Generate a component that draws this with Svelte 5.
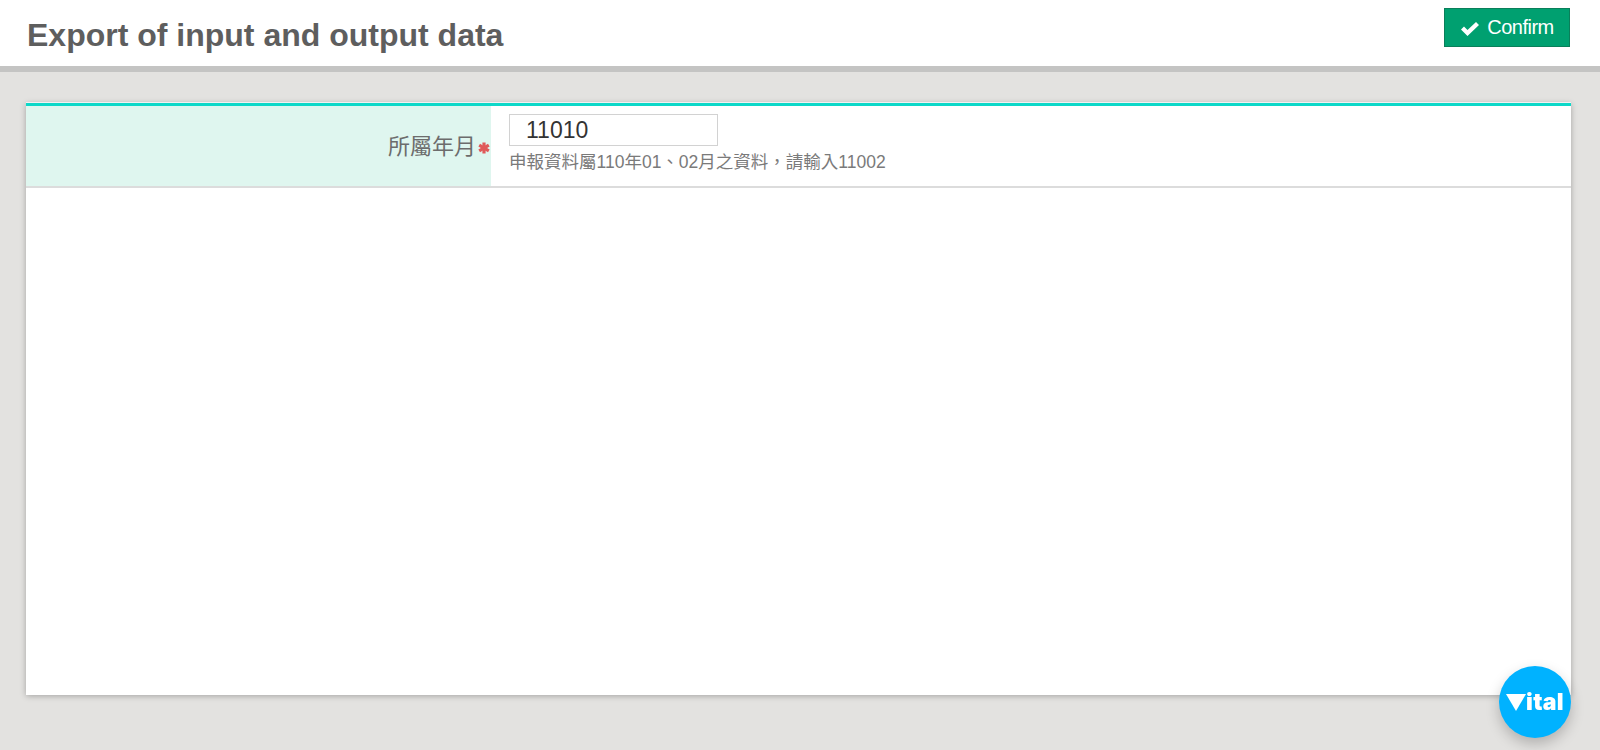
<script>
let period = $state("11010");
</script>

<div class="page">
	<header class="topbar">
		<h1>Export of input and output data</h1>
		<button class="confirm" type="button">
			<svg class="check" viewBox="0 0 20 16" width="20" height="16" aria-hidden="true">
				<path d="M1 8.5 L4 5.5 L7.5 9 L16 1 L19 4 L7.5 15 Z" fill="#fff" />
			</svg>
			Confirm
		</button>
	</header>

	<main class="content">
		<section class="card">
			<div class="row">
				<div class="label">
					<span>所屬年月</span>
					<svg class="required" viewBox="0 0 12 12" width="12" height="12" aria-label="required">
						<g stroke="#e05a5a" stroke-width="3.2">
							<path d="M6 0.5 V11.5" />
							<path d="M1.2 3.2 L10.8 8.8" />
							<path d="M10.8 3.2 L1.2 8.8" />
						</g>
					</svg>
				</div>
				<div class="field">
					<input type="text" bind:value={period} />
					<p class="hint">申報資料屬110年01、02月之資料&#65292;請輸入11002</p>
				</div>
			</div>
		</section>
	</main>

	<button class="fab" type="button" aria-label="Vital">
		<svg viewBox="0 0 20 17" width="20" height="17" aria-hidden="true">
			<path d="M0 0 H20 L10 17 Z" fill="#fff" />
		</svg>
		<span>ital</span>
	</button>
</div>

<style>
	:global(body) {
		background: #e3e2e0;
	}

	.page {
		height: 750px;
		display: flex;
		flex-direction: column;
		overflow: hidden;
		font-family: "Liberation Sans", "Noto Sans CJK TC", sans-serif;
	}

	.topbar {
		height: 66px;
		flex: none;
		box-sizing: content-box;
		background: #fff;
		border-bottom: 6px solid #c4c4c3;
		display: flex;
		justify-content: space-between;
		align-items: flex-start;
		padding: 0 30px 0 27px;
	}

	h1 {
		margin: 16px 0 0;
		font-size: 32px;
		line-height: 38px;
		font-weight: 700;
		color: #5e5e5e;
	}

	.confirm {
		margin-top: 8px;
		width: 126px;
		height: 39px;
		display: flex;
		align-items: center;
		justify-content: center;
		gap: 7px;
		background: #00a070;
		border: 1px solid #0a7f5a;
		color: #fff;
		font-family: inherit;
		font-size: 20px;
		letter-spacing: -0.5px;
		padding: 0 0 1px;
	}

	.check {
		margin-top: 3px;
	}

	.content {
		padding: 31px 29px 0 26px;
	}

	.card {
		height: 592px;
		box-sizing: border-box;
		background: #fff;
		border-top: 3px solid #0dd8c8;
		box-shadow: 0 -1px 0 #f2f2f2, 0 1px 6px rgba(0, 0, 0, 0.28);
	}

	.row {
		height: 80px;
		display: flex;
		box-sizing: content-box;
		border-bottom: 2px solid #dcdcdc;
	}

	.label {
		width: 465px;
		flex: none;
		box-sizing: border-box;
		background: #dff6ef;
		display: flex;
		align-items: center;
		justify-content: flex-end;
		gap: 2px;
		padding: 0 1px 4px 0;
		font-size: 22px;
		color: #6c6c6c;
	}

	.required {
		margin-top: 7px;
	}

	.field {
		padding: 8px 0 0 18px;
	}

	input {
		display: block;
		width: 209px;
		height: 32px;
		box-sizing: border-box;
		border: 1px solid #d2d2d2;
		padding: 0 0 0 16px;
		font-family: inherit;
		font-size: 23px;
		color: #333;
		background: #fff;
		outline: none;
	}

	.hint {
		margin: 5px 0 0 0;
		font-size: 17.5px;
		line-height: 22px;
		color: #7a7a7a;
		white-space: nowrap;
	}

	.fab {
		position: fixed;
		left: 1499px;
		top: 666px;
		width: 72px;
		height: 72px;
		border: none;
		border-radius: 50%;
		background: #00b2ff;
		box-shadow: 0 6px 14px rgba(0, 0, 0, 0.22);
		display: flex;
		align-items: center;
		justify-content: center;
		padding: 0;
		gap: 0;
		color: #fff;
	}

	.fab span {
		font-family: "Inter", sans-serif;
		font-weight: 900;
		font-size: 23px;
		letter-spacing: 0.3px;
		line-height: 1;
	}
</style>
